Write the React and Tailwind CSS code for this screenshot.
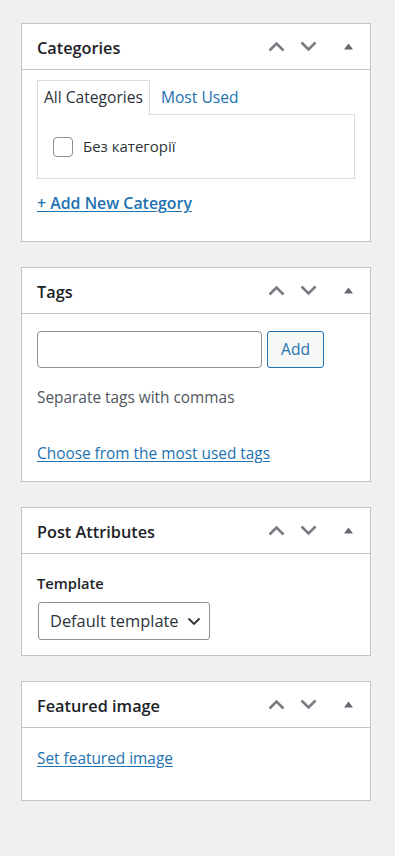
import React from "react";

const Up = () => (
  <svg width="17" height="11" viewBox="0 0 17 11" fill="none">
    <polyline points="1.5,9.5 8.5,2.5 15.5,9.5" stroke="#787c82" strokeWidth="2.6" />
  </svg>
);

const Down = () => (
  <svg width="17" height="11" viewBox="0 0 17 11" fill="none">
    <polyline points="1.5,1.5 8.5,8.5 15.5,1.5" stroke="#787c82" strokeWidth="2.6" />
  </svg>
);

const Toggle = () => (
  <svg width="9" height="7" viewBox="0 0 9 7">
    <polygon points="4.5,0.5 9,6.5 0,6.5" fill="#646970" />
  </svg>
);

const Box = ({ title, children, bodyClass }) => (
  <div className="bg-white border border-[#c3c4c7] mb-[25px]">
    <div className="h-[46px] border-b border-[#c3c4c7] flex items-center pl-[15px]">
      <h2 className="mt-[3px] text-[16.3px] font-semibold text-[#1d2327]">{title}</h2>
      <div className="ml-auto flex items-center">
        <Up />
        <div className="w-[15px]" />
        <Down />
        <div className="w-[27px]" />
        <Toggle />
        <div className="w-[17px]" />
      </div>
    </div>
    <div className={"px-[15px] " + bodyClass}>{children}</div>
  </div>
);

export default function App() {
  return (
    <div
      className="min-h-[856px] bg-[#f0f0f1] pt-[23px] pl-[21px] w-[395px] text-[15.4px] text-[#3c434a]"
      style={{ fontFamily: '"Open Sans", "Noto Sans", sans-serif' }}
    >
      <div className="w-[350px]">
        <Box title="Categories" bodyClass="pt-[10px] pb-[28px]">
          <div className="flex items-end">
            <div className="relative z-10 bg-white border border-b-0 border-[#dcdcde] h-[35px] px-[6px] flex items-center mb-[-1px] text-[#2c3338] text-[15.6px]">
              All Categories
            </div>
            <div className="h-[34px] pt-[2px] px-[11px] flex items-center text-[#2271b1] text-[15.6px]">
              Most Used
            </div>
          </div>
          <div className="border border-[#dcdcde] h-[65px] pl-[15px] flex items-center">
            <span className="w-[20px] h-[20px] rounded-[4px] border border-[#8c8f94] bg-white" />
            <span className="ml-[10px] text-[15px] text-[#2c3338]">Без категорії</span>
          </div>
          <a className="block mt-[14px] leading-[20px] font-semibold text-[15.9px] text-[#2271b1] underline underline-offset-2">
            + Add New Category
          </a>
        </Box>

        <Box title="Tags" bodyClass="pt-[17px] pb-[17px]">
          <div className="flex">
            <div className="w-[225px] h-[37px] border border-[#8c8f94] rounded-[4px] bg-white" />
            <button className="ml-[5px] w-[57px] h-[37px] border border-[#2271b1] rounded-[3px] bg-[#f6f7f7] text-[#2271b1] text-[15.6px]">
              Add
            </button>
          </div>
          <p className="mt-[20px] leading-[20px] text-[#50575e]">Separate tags with commas</p>
          <a className="block mt-[36px] leading-[20px] text-[#2271b1] underline underline-offset-2">
            Choose from the most used tags
          </a>
        </Box>

        <Box title="Post Attributes" bodyClass="pt-[19px] pb-[15px]">
          <p className="leading-[20px] font-semibold text-[14.7px] text-[#1d2327]">Template</p>
          <div className="mt-[9px] ml-[1px] w-[172px] h-[38px] border border-[#8c8f94] rounded-[3px] flex items-center pl-[11px] pr-[8px] text-[16.4px] text-[#2c3338]">
            <span>Default template</span>
            <svg className="ml-auto" width="14" height="9" viewBox="0 0 14 9" fill="none">
              <polyline points="1.5,1.5 7,7 12.5,1.5" stroke="#2c3338" strokeWidth="1.8" />
            </svg>
          </div>
        </Box>

        <Box title="Featured image" bodyClass="pt-[21px] pb-[31px]">
          <a className="block leading-[20px] text-[#2271b1] underline underline-offset-2">
            Set featured image
          </a>
        </Box>
      </div>
    </div>
  );
}
